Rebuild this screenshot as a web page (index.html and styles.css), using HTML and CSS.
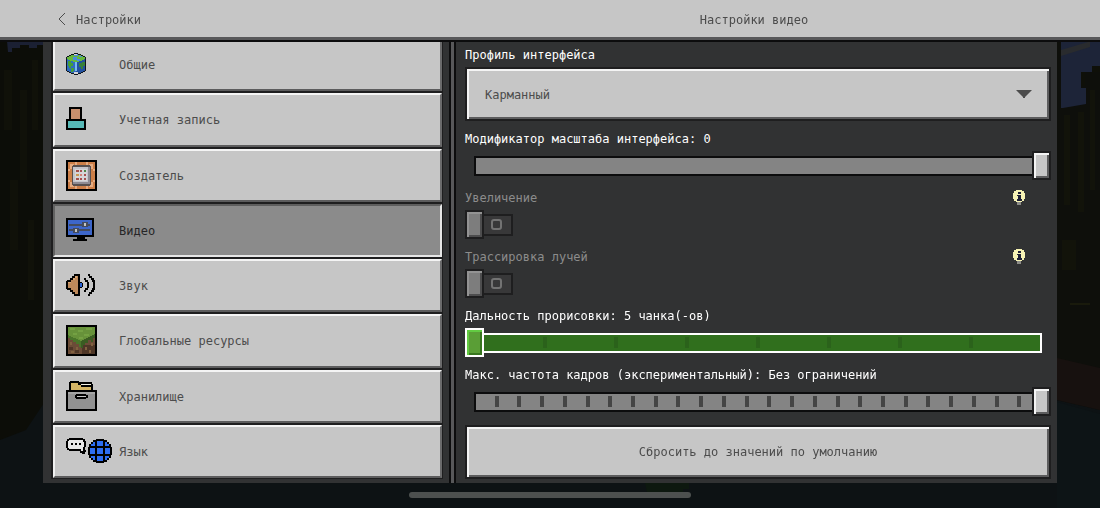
FILE: index.html
```html
<!DOCTYPE html>
<html lang="ru">
<head>
    <meta charset="UTF-8">
    <meta name="viewport" content="width=device-width, initial-scale=1.0">
    <title>Настройки видео</title>
    <link rel="stylesheet" href="styles.css">
</head>
<body>

    <!-- Night forest behind the menu -->
    <svg class="scene" viewBox="0 0 1100 508" preserveAspectRatio="none" aria-hidden="true">
        <rect width="1100" height="508" fill="#0d1214"/>
        <path fill="#0c0d08" d="M0 0h46v400l-20 30-26 10z"/>
        <path fill="#101109" d="M4 70h8v60h-8zM20 90h7v90h-7zM32 60h6v70h-6zM10 180h8v70h-8zM28 220h6v80h-6z"/>
        <path fill="#1b2033" d="M7 41h36v4h-6v3h-8v-3H20v3h-8v4H8z"/>
        <path fill="#0e0f0b" d="M1056 40h44v370l-44-10z"/>
        <path fill="#1d2438" d="M1061 40h39v26h-8v6h-11v16h5v16l-23 4h-2z"/>
        <path fill="#292b2e" d="M1061 50l27-8h2v5l-29 9z"/>
        <path fill="#0f1009" d="M1081 72h4v14h-4zM1092 66h8v6h-8z"/>
        <path fill="#12130a" d="M1064 115h6v90h-6zM1078 112h6v100h-6zM1090 90h5v100h-5zM1062 240h14v30h-14z"/>
        <path fill="#191a0c" d="M1070 303h20v2h-20z"/>
        <path fill="#17110f" d="M1057 358l43 10v42l-43-10z"/>
        <path fill="#0d1416" d="M1057 402l43 12v94h-43z"/>
        <path fill="#0d180f" d="M645 483h44v6h-6v5h-10v3h-18v-5h-8z"/>
    </svg>

    <header class="topbar">
        <button class="back" type="button">
            <svg class="back-arrow" viewBox="0 0 10 14" aria-hidden="true"><path d="M8 0 2 6l6 6"/></svg>
            <span>Настройки</span>
        </button>
        <h1>Настройки видео</h1>
    </header>

    <main class="panel">
        <nav class="sidebar">
            <ul class="menu">
                <li>
                    <button class="menu-item" type="button">
                        <svg class="icon" viewBox="0 0 48 32" aria-hidden="true">
                            <path fill="#10161c" d="M9 4h4v1h3v1h2v1h2v1h1v14h-1v1h-2v1h-2v1h-3v1H9v-1H6v-1H4v-1H2v-1H1V8h1V7h2V6h2V5h3z"/>
                            <path fill="#66b83c" d="M9 5h4v1h3v1h2v1h2v2l-9 4-9-4V8h2V7h2V6h3z"/>
                            <path fill="#4a8ae0" d="M9 5h4v2H9zM8 8h4v2h3v2h-3v-1H8zM14 7h3v1h-3z"/>
                            <path fill="#2f6cc0" d="M2 10l9 4v11H9v-1H6v-1H4v-1H2z"/>
                            <path fill="#22509f" d="M20 10l-9 4v11h2v-1h3v-1h2v-1h2z"/>
                            <path fill="#459f38" d="M3 12h3v2h2v3H6v2H4v-2H3zM6 19h3v3H8v1H6z"/>
                            <path fill="#37803a" d="M14 14h3v-1h3v4h-2v3h-2v-2h-2z"/>
                            <path fill="#79b9ee" d="M10 13h2v9h-2z"/>
                            <path fill="#d2d4d8" d="M9 5h3v1H9zM9 23h4v2H9z"/>
                        </svg>
                        Общие
                    </button>
                </li>
                <li>
                    <button class="menu-item" type="button">
                        <svg class="icon" viewBox="0 0 48 32" aria-hidden="true">
                            <path fill="#000" d="M4 3h13v12h4v11H1V15h3z"/>
                            <path fill="#c98f6d" d="M6 5h9v10H6z"/>
                            <path fill="#57b9b7" d="M3 17h16v7H3z"/>
                        </svg>
                        Учетная запись
                    </button>
                </li>
                <li>
                    <button class="menu-item" type="button">
                        <svg class="icon" viewBox="0 0 48 32" aria-hidden="true">
                            <path fill="#000" d="M1 0h31v31H1z"/>
                            <path fill="#cd7f48" d="M3 2h27v27H3z"/>
                            <path fill="#e5ab80" d="M5 4h4v2H7v3H5zM24 4h4v5h-2V6h-2zM5 22h2v3h2v2H5zM26 22h2v5h-4v-2h2zM10 2h2v3h-2zM21 2h2v3h-2zM10 26h2v3h-2zM21 26h2v3h-2zM3 9h2v2H3zM28 9h2v2h-2zM3 20h2v2H3zM28 20h2v2h-2z"/>
                            <path fill="#57504f" d="M8 5h17v1h1v19h-1v1H8v-1H7V6h1z"/>
                            <path fill="#8e8b92" d="M8 7h17v17H8z"/>
                            <path fill="#c4c4ca" d="M8 7h15v15H8z"/>
                            <path fill="#d6d6d8" d="M10 9h12v12H10z"/>
                            <path fill="#a5514f" d="M11 10h3v2h-3zM15 10h2v2h-2zM11 18h3v2h-3zM15 18h2v2h-2zM19 14h2v2h-2zM19 18h2v2h-2z"/>
                            <path fill="#c99a55" d="M11 14h3v2h-3z"/>
                            <path fill="#d3837a" d="M15 14h2v2h-2z"/>
                            <path fill="#4f8b4a" d="M19 10h2v2h-2z"/>
                        </svg>
                        Создатель
                    </button>
                </li>
                <li>
                    <button class="menu-item selected" type="button" aria-current="page">
                        <svg class="icon" viewBox="0 0 48 32" aria-hidden="true">
                            <path fill="#000" d="M1 3h28v19h-9v2h2v2H8v-2h4v-2H1z"/>
                            <path fill="#3d66c9" d="M3 5h24v15H3z"/>
                            <path fill="#444b5c" d="M4 9h13v2H4zM22 9h3v2h-3zM4 14h4v2H4zM13 14h12v2H13zM17 7h6v5h-6zM8 13h6v5H8z"/>
                            <path fill="#c4c4c4" d="M19 8h2v3h-2zM10 14h2v3h-2z"/>
                        </svg>
                        Видео
                    </button>
                </li>
                <li>
                    <button class="menu-item" type="button">
                        <svg class="icon" viewBox="0 0 48 32" aria-hidden="true">
                            <path fill="#000" d="M9 4h6v8h2v1h1v4h-1v1h-2v8H9v-2H7v-2H5v-2H2v-1H1V11h1v-1h3V8h2V6h2z"/>
                            <path fill="#bd895a" d="M10 6h3v18h-3v-2H8v-2H6v-2H3v-6h3v-2h2V8h2z"/>
                            <path fill="#d7a575" d="M10 6h2v2h-2v2H8V8h2zM3 12h3v1H3z"/>
                            <path fill="#2a62d4" d="M15 13h2v4h-2z"/>
                            <path fill="#000" d="M19 8h2v2h2v2h1v6h-1v2h-2v2h-2v-2h1v-2h2v-6h-2v-2h-1zM23 4h2v2h2v2h2v2h1v10h-1v2h-2v2h-2v2h-2v-2h1v-2h2v-2h1v-2h1v-6h-1v-2h-1V8h-2V6h-1z"/>
                        </svg>
                        Звук
                    </button>
                </li>
                <li>
                    <button class="menu-item" type="button">
                        <svg class="icon" viewBox="0 0 48 32" aria-hidden="true">
                            <path fill="#000" d="M1 0h31v31H1z"/>
                            <path fill="#6b4c37" d="M3 10h27v19H3z"/>
                            <path fill="#4e3627" d="M17 20h13v9H17zM4 22h4v3H4zM10 25h4v3h-4z"/>
                            <path fill="#80603f" d="M5 17h2v3H5zM11 22h2v3h-2zM20 22h2v3h-2zM26 18h2v3h-2zM6 26h3v2H6zM24 25h2v3h-2z"/>
                            <path fill="#67923a" d="M3 2h27v9l-14 6L3 10z"/>
                            <path fill="#4a752a" d="M3 10l13 6v6h-2v-3h-3v-2H8v-2H5v-2H3z"/>
                            <path fill="#3a5c22" d="M30 9l-14 7v7h2v-3h2v-2h3v-3h3v2h2v-4h2z"/>
                            <path fill="#74a143" d="M5 3h5v2H5zM13 5h5v2h-5zM21 3h6v2h-6zM8 8h4v2H8zM19 9h5v2h-5zM14 12h4v2h-4z"/>
                        </svg>
                        Глобальные ресурсы
                    </button>
                </li>
                <li>
                    <button class="menu-item" type="button">
                        <svg class="icon" viewBox="0 0 48 32" aria-hidden="true">
                            <path fill="#000" d="M5 0h9v1h13v2h1v6h4v21H1V9h3V1h1z"/>
                            <path fill="#d5b565" d="M6 2h7v2h3v2h10v3H6z"/>
                            <path fill="#f2efe2" d="M16 3h10v1H16z"/>
                            <path fill="#929292" d="M3 11h27v17H3z"/>
                            <path fill="#a5a5a5" d="M3 11h27v2H3z"/>
                            <path fill="#000" d="M11 13h10v1h2v3h-2v1H11v-1h-1v-3h1z"/>
                            <path fill="#c6c6c6" d="M12 15h9v1h-9z"/>
                        </svg>
                        Хранилище
                    </button>
                </li>
                <li>
                    <button class="menu-item" type="button">
                        <svg class="icon" viewBox="0 0 48 32" aria-hidden="true">
                            <path fill="#000" d="M4 2h14v1h2v2h1v6h-1v3h1v2h-1v2h-3v-1h-2v-2H4v-1H2v-2H1V5h1V3h2z"/>
                            <path fill="#e8e8e8" d="M4 4h14v2h1v5h-1v4h-2v-2H4v-1H3V5h1z"/>
                            <path fill="#000" d="M6 7h2v2H6zM10 7h2v2h-2zM14 7h2v2h-2z"/>
                            <path fill="#000" d="M31 3h8v1h3v2h2v2h2v3h1v8h-1v3h-2v2h-2v2h-3v1h-8v-1h-3v-2h-2v-2h-2v-3h-1v-8h1V8h2V6h2V4h3z"/>
                            <path fill="#2d6cf0" d="M32 5h6v5h-6zM29 6h1v4h-4V8h2V6zM40 6h2v2h2v2h-4zM25 12h5v6h-5zM32 12h6v6h-6zM40 12h5v6h-5zM26 20h4v4h-2v-2h-2zM32 20h6v5h-6zM40 20h4v2h-2v2h-2z"/>
                        </svg>
                        Язык
                    </button>
                </li>
            </ul>
        </nav>

        <form class="settings">
            <div class="field">
                <label for="profile">Профиль интерфейса</label>
                <div class="dropdown">
                    <select id="profile">
                        <option>Карманный</option>
                        <option>Классический</option>
                    </select>
                    <svg class="caret" viewBox="0 0 16 8" aria-hidden="true"><path d="M0 0h16L9 7v1H7V7z"/></svg>
                </div>
            </div>

            <div class="field">
                <label for="scale">Модификатор масштаба интерфейса: 0</label>
                <div class="slider">
                    <div class="track"></div>
                    <input id="scale" type="range" min="-2" max="0" value="0">
                </div>
            </div>

            <div class="field disabled">
                <div class="label-row">
                    <label for="upscaling">Увеличение</label>
                    <svg class="info" viewBox="0 0 12 16" aria-hidden="true">
                        <path fill="#f6f3b4" d="M3 0h6v1h2v2h1v6h-1v2H9v1H3v-1H1V9H0V3h1V1h2z"/>
                        <path fill="#1d2036" d="M5 2h3v2H5zM4 5h4v4h1v2H4V9h1V6H4z"/>
                        <path fill="#8d8d88" d="M4 12h4v3H4z"/>
                    </svg>
                </div>
                <input id="upscaling" class="toggle" type="checkbox" disabled>
            </div>

            <div class="field disabled">
                <div class="label-row">
                    <label for="raytracing">Трассировка лучей</label>
                    <svg class="info" viewBox="0 0 12 16" aria-hidden="true">
                        <path fill="#f6f3b4" d="M3 0h6v1h2v2h1v6h-1v2H9v1H3v-1H1V9H0V3h1V1h2z"/>
                        <path fill="#1d2036" d="M5 2h3v2H5zM4 5h4v4h1v2H4V9h1V6H4z"/>
                        <path fill="#8d8d88" d="M4 12h4v3H4z"/>
                    </svg>
                </div>
                <input id="raytracing" class="toggle" type="checkbox" disabled>
            </div>

            <div class="field">
                <label for="distance">Дальность прорисовки: 5 чанка(-ов)</label>
                <div class="slider active">
                    <div class="track steps-8"></div>
                    <input id="distance" type="range" min="0" max="8" value="0">
                </div>
            </div>

            <div class="field">
                <label for="fps">Макс. частота кадров (экспериментальный): Без ограничений</label>
                <div class="slider">
                    <div class="track steps-25"></div>
                    <input id="fps" type="range" min="0" max="25" value="25">
                </div>
            </div>

            <button class="reset" type="reset">Сбросить до значений по умолчанию</button>
        </form>
    </main>

    <div class="home-bar"></div>

</body>
</html>
```
FILE: styles.css
```css
*, *::before, *::after {
    box-sizing: border-box;
}
body {
    display: flex;
    flex-direction: column;
    min-height: 100vh;
    margin: 0;
    padding-bottom: 10px;
    background-color: #0d1214;
    color: #fff;
    font: 12px/18px "DejaVu Sans Mono", monospace;
}
button, select, input {
    margin: 0;
    font: inherit;
    border-radius: 0;
}
.scene {
    position: fixed;
    inset: 0;
    z-index: -1;
    width: 100%;
    height: 100%;
}

/* Top bar */
.topbar {
    position: relative;
    z-index: 1;
    display: grid;
    grid-template-columns: 408fr 606fr;
    align-items: center;
    height: 40px;
    padding: 2px 43px 0;
    background-color: #c6c6c6;
    border-bottom: 3px solid #58585a;
    box-shadow: 0 2px #0c0c0d;
    color: #4c4c4c;
}
.topbar h1 {
    margin: 0;
    font-size: 12px;
    font-weight: normal;
    text-align: center;
}
.back {
    display: flex;
    align-items: center;
    gap: 9px;
    padding: 0 0 0 14px;
    background: none;
    border: 0;
    color: inherit;
}
.back-arrow {
    width: 10px;
    height: 14px;
    fill: none;
    stroke: #4c4c4c;
}

/* Main panel */
.panel {
    flex: 1;
    display: grid;
    grid-template-columns: 408fr 606fr;
    margin: 2px 43px 0;
    background-color: #313233;
}
.sidebar {
    display: flex;
    padding: 0 6px 4px 8px;
    border-right: 2px solid #0c0c0d;
}
.menu {
    flex: 1;
    display: flex;
    flex-direction: column;
    margin: -5px 0 0;
    padding: 0 0 0 1px;
    list-style: none;
    background-color: #1e1e1f;
}
.menu li {
    flex: 1;
    display: flex;
    padding: 1px;
}
.menu-item {
    flex: 1;
    display: flex;
    align-items: center;
    gap: 6px;
    min-height: 50px;
    padding: 1px 10px 0;
    background-color: #c6c6c6;
    border: 2px solid;
    border-color: #f4f4f4 #6a6a6b #5c5c5d #f0f0f0;
    color: #4c4c4c;
    text-align: left;
}
.menu-item.selected {
    background-color: #8b8b8b;
    border-color: #5e5e5e #e6e6e6 #e6e6e6 #626262;
    color: #262627;
}
.icon {
    flex: none;
    width: 48px;
    height: 32px;
    shape-rendering: crispEdges;
}

/* Settings */
.settings {
    display: flex;
    flex-direction: column;
    gap: 9px;
    padding: 4px 6px 4px 11px;
    border-left: 3px solid #58585a;
    box-shadow: inset 2px 0 #0c0c0d;
}
.field {
    display: flex;
    flex-direction: column;
    gap: 3px;
}
.field label {
    display: block;
}
.disabled label {
    color: #8c8c8c;
}
.label-row {
    display: flex;
    justify-content: space-between;
    align-items: center;
    height: 18px;
    padding-right: 26px;
}
.info {
    width: 12px;
    height: 16px;
    shape-rendering: crispEdges;
}
.dropdown {
    position: relative;
    display: flex;
}
.dropdown select,
.reset {
    width: 100%;
    height: 54px;
    appearance: none;
    background-color: #c6c6c6;
    border: 2px solid #1e1e1f;
    box-shadow: inset 2px 2px #f4f4f4, inset -2px -2px #5c5c5d;
    color: #4c4c4c;
}
.dropdown select {
    padding: 1px 18px 0;
}
.caret {
    position: absolute;
    top: 23px;
    right: 19px;
    width: 16px;
    height: 8px;
    fill: #4c4c4c;
    pointer-events: none;
}

/* Sliders */
.slider {
    display: grid;
    align-items: center;
    height: 29px;
}
.track,
.slider input {
    grid-area: 1 / 1;
}
.track {
    height: 20px;
    margin: 0 9px;
    background: #848484 center / 100% 11px no-repeat border-box;
    border: 2px solid #0c0c0d;
}
.steps-25 {
    background-image: repeating-linear-gradient(90deg, #454545 0 2px, transparent 2px calc(4% - 2px), #454545 calc(4% - 2px) 4%);
}
.steps-8 {
    background-image: repeating-linear-gradient(90deg, #2b621b 0 2px, transparent 2px calc(12.5% - 2px), #2b621b calc(12.5% - 2px) 12.5%);
}
.slider input {
    width: 100%;
    height: 29px;
    appearance: none;
    background: none;
}
.slider input::-webkit-slider-thumb {
    appearance: none;
    width: 19px;
    height: 29px;
    background-color: #c6c6c6;
    border: 2px solid #1e1e1f;
    box-shadow: inset 2px 2px #f4f4f4, inset -2px -2px #5c5c5d;
}
.slider.active .track {
    background-color: #306f1d;
    border-color: #fff;
}
.slider.active input::-webkit-slider-thumb {
    background-color: #5a9e36;
    border-color: #fff;
    box-shadow: inset 2px 2px #62cb42, inset -2px -2px #38761f;
}

/* Toggles */
.toggle {
    display: flex;
    align-items: center;
    gap: 7px;
    width: 48px;
    height: 29px;
    appearance: none;
    background: linear-gradient(#383839, #383839) left 18px center / 28px 18px no-repeat,
                linear-gradient(#1e1e1f, #1e1e1f) right center / 40px 22px no-repeat;
}
.toggle::before {
    content: "";
    width: 19px;
    height: 29px;
    background-color: #7d7d7d;
    border: 2px solid #1e1e1f;
    box-shadow: inset 2px 2px #939393, inset -2px -2px #4d4d4e;
}
.toggle::after {
    content: "";
    width: 11px;
    height: 11px;
    border: 2px solid #737373;
    border-radius: 3px;
}

/* Home indicator */
.home-bar {
    align-self: center;
    width: 282px;
    max-width: 60%;
    height: 6px;
    margin-top: 9px;
    background-color: #4d504f;
    border-radius: 3px;
}
```
